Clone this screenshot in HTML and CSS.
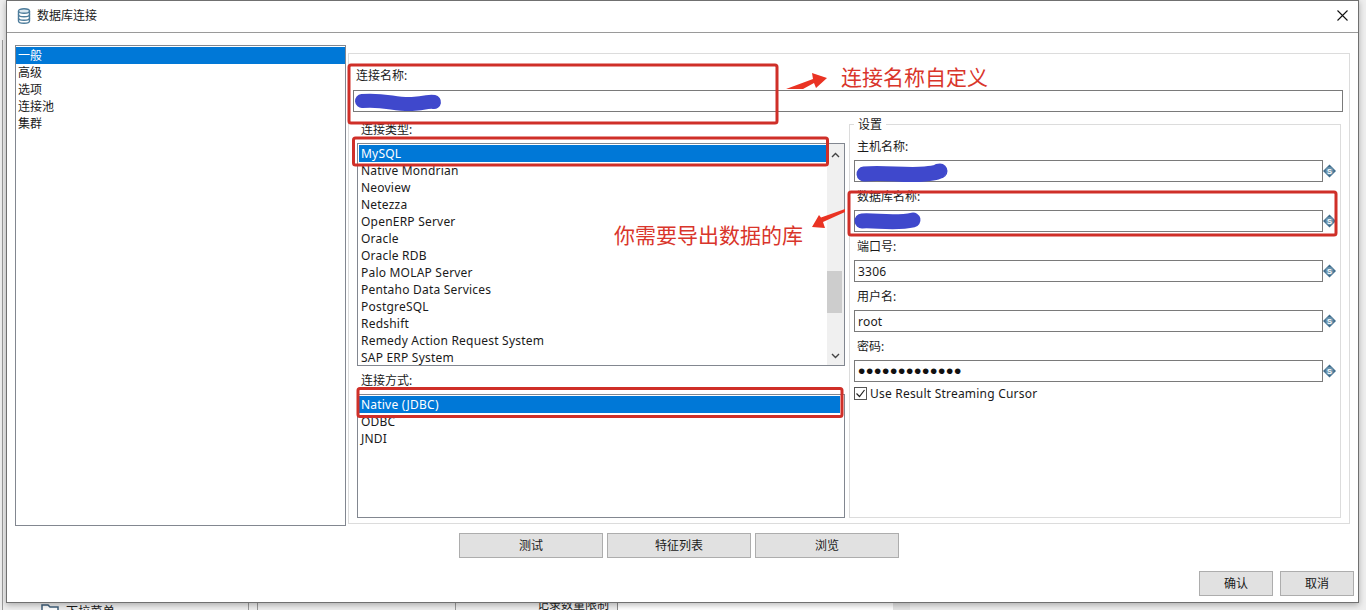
FILE: index.html
```html
<!DOCTYPE html>
<html lang="zh">
<head>
<meta charset="utf-8">
<title>数据库连接</title>
<link rel="stylesheet" href="styles.css">
</head>
<body>
<div class="backdrop">
  <span class="bg-line bg-line-a"></span>
  <span class="bg-line bg-line-b"></span>
  <span class="bg-line bg-line-c"></span>
  <svg class="bg-folder" width="18" height="12" viewBox="0 0 18 12"><path d="M1 11V1h6l2 2h8v8z" fill="#fff" stroke="#41627e" stroke-width="1.5"/></svg>
  <span class="bg-tree">下拉菜单</span>
  <span class="bg-limit">记录数量限制</span>
  <span class="bg-select"></span>
</div>

<div class="window">
  <header class="titlebar">
    <svg class="db-icon" width="14" height="16" viewBox="0 0 14 16" fill="none" stroke="#4d7c9b" stroke-width="1.4">
      <ellipse cx="7" cy="3" rx="5.5" ry="2.2" fill="#dbe8f0"/>
      <path d="M1.5 3v10c0 1.2 2.5 2.2 5.5 2.2s5.5-1 5.5-2.2V3"/>
      <path d="M1.5 6.5c0 1.2 2.5 2.2 5.5 2.2s5.5-1 5.5-2.2M1.5 10c0 1.2 2.5 2.2 5.5 2.2s5.5-1 5.5-2.2"/>
    </svg>
    <span class="title-text">数据库连接</span>
    <svg class="close-icon" width="11" height="11" viewBox="0 0 11 11" stroke="#111" stroke-width="1.1"><path d="M.5.5l10 10M10.500.5l-10 10"/></svg>
  </header>

  <div class="content">
    <ul class="nav">
      <li class="row selected">一般</li>
      <li class="row">高级</li>
      <li class="row">选项</li>
      <li class="row">连接池</li>
      <li class="row">集群</li>
    </ul>

    <section class="panel">
      <div class="name-label">连接名称:</div>
      <div class="textbox name-box"></div>

      <div class="columns">
        <div class="left-col">
          <div class="type-label">连接类型:</div>
          <div class="listbox type-list">
            <ul class="rows">
              <li class="row selected">MySQL</li>
              <li class="row">Native Mondrian</li>
              <li class="row">Neoview</li>
              <li class="row">Netezza</li>
              <li class="row">OpenERP Server</li>
              <li class="row">Oracle</li>
              <li class="row">Oracle RDB</li>
              <li class="row">Palo MOLAP Server</li>
              <li class="row">Pentaho Data Services</li>
              <li class="row">PostgreSQL</li>
              <li class="row">Redshift</li>
              <li class="row">Remedy Action Request System</li>
              <li class="row">SAP ERP System</li>
            </ul>
            <div class="scrollbar">
              <svg class="chev" width="9" height="6" viewBox="0 0 9 6" fill="none" stroke="#444" stroke-width="1.4"><path d="M1 5l3.500-3.500L8 5"/></svg>
              <div class="thumb"></div>
              <svg class="chev chev-down" width="9" height="6" viewBox="0 0 9 6" fill="none" stroke="#444" stroke-width="1.4"><path d="M1 1l3.500 3.500L8 1"/></svg>
            </div>
          </div>
          <div class="mode-label">连接方式:</div>
          <div class="listbox mode-list">
            <ul class="rows">
              <li class="row selected">Native (JDBC)</li>
              <li class="row">ODBC</li>
              <li class="row">JNDI</li>
            </ul>
          </div>
        </div>

        <fieldset class="settings">
          <legend class="settings-legend">设置</legend>
          <div class="field-label">主机名称:</div>
          <div class="field-row">
            <div class="textbox"></div>
            <svg class="var-icon" width="13" height="14" viewBox="0 0 14 14"><path d="M7 0l7 7-7 7-7-7z" fill="#3f6c8c"/><circle cx="7" cy="7" r="4.300" fill="#6a93ad"/><text x="7" y="10" class="var-s">S</text></svg>
          </div>
          <div class="field-label">数据库名称:</div>
          <div class="field-row">
            <div class="textbox"></div>
            <svg class="var-icon" width="13" height="14" viewBox="0 0 14 14"><path d="M7 0l7 7-7 7-7-7z" fill="#3f6c8c"/><circle cx="7" cy="7" r="4.300" fill="#6a93ad"/><text x="7" y="10" class="var-s">S</text></svg>
          </div>
          <div class="field-label">端口号:</div>
          <div class="field-row">
            <div class="textbox">3306</div>
            <svg class="var-icon" width="13" height="14" viewBox="0 0 14 14"><path d="M7 0l7 7-7 7-7-7z" fill="#3f6c8c"/><circle cx="7" cy="7" r="4.300" fill="#6a93ad"/><text x="7" y="10" class="var-s">S</text></svg>
          </div>
          <div class="field-label">用户名:</div>
          <div class="field-row">
            <div class="textbox">root</div>
            <svg class="var-icon" width="13" height="14" viewBox="0 0 14 14"><path d="M7 0l7 7-7 7-7-7z" fill="#3f6c8c"/><circle cx="7" cy="7" r="4.300" fill="#6a93ad"/><text x="7" y="10" class="var-s">S</text></svg>
          </div>
          <div class="field-label">密码:</div>
          <div class="field-row">
            <div class="textbox dots">•••••••••••••</div>
            <svg class="var-icon" width="13" height="14" viewBox="0 0 14 14"><path d="M7 0l7 7-7 7-7-7z" fill="#3f6c8c"/><circle cx="7" cy="7" r="4.300" fill="#6a93ad"/><text x="7" y="10" class="var-s">S</text></svg>
          </div>
          <div class="check-row">
            <svg class="checkbox" width="13" height="13" viewBox="0 0 13 13" fill="none"><rect x=".5" y=".5" width="12" height="12" fill="#fff" stroke="#555"/><path d="M2.500 6.500l3 3 5-6.500" stroke="#222" stroke-width="1.200"/></svg>
            <span>Use Result Streaming Cursor</span>
          </div>
        </fieldset>
      </div>
    </section>
  </div>

  <div class="test-row">
    <button class="btn wide">测试</button>
    <button class="btn wide">特征列表</button>
    <button class="btn wide">浏览</button>
  </div>
  <div class="action-row">
    <button class="btn small">确认</button>
    <button class="btn small">取消</button>
  </div>
</div>

<svg class="marks" width="1366" height="610" viewBox="0 0 1366 610">
  <g fill="none" stroke="#3f48cc" stroke-linecap="round">
    <path d="M362 101C385 99 395 105 412 104S428 101 434 102" stroke-width="14"/>
    <path d="M864 174C885 172 905 176 925 174S935 171 940 171" stroke-width="15"/>
    <path d="M862 221C875 220 895 224 913 220" stroke-width="15"/>
  </g>
  <g fill="none" stroke="#cf2f28" stroke-width="3">
    <rect x="349" y="65" width="428" height="58" rx="2"/>
    <rect x="353.500" y="138" width="474" height="27" rx="2"/>
    <rect x="358" y="388.500" width="484" height="28" rx="2"/>
    <rect x="849" y="192" width="487" height="43" rx="2"/>
  </g>
  <path d="M786 89L813 79L812 73L827 78L816 88L814 83L803 89Z" fill="#ea3323"/>
  <path d="M845 209L821 217.500L819 215L812 227L825 228L823 222L845 212Z" fill="#ea3323"/>
</svg>
<div class="note note-name">连接名称自定义</div>
<div class="note note-db">你需要导出数据的库</div>
</body>
</html>
```

FILE: styles.css
```css
* { box-sizing: border-box; }
html, body { margin: 0; height: 610px; overflow: hidden; }
body {
  position: relative;
  background: #eeeeee;
  font: 12px/17px "Noto Sans", "Noto Sans CJK SC", sans-serif;
  letter-spacing: .21px;
  color: #1a1a1a;
}
ul { list-style: none; margin: 0; padding: 0; }

.backdrop { position: absolute; inset: 0; }
.bg-line { position: absolute; top: 40px; bottom: 0; width: 1px; background: #9a9a9a; }
.bg-line-a { left: 2px; }
.bg-line-b { left: 248px; top: 600px; box-shadow: 9px 0 0 #9a9a9a; }
.bg-line-c { left: 455px; top: 600px; width: 1px; }
.bg-folder { position: absolute; left: 41px; top: 604px; }
.bg-tree { position: absolute; left: 66px; top: 603px; }
.bg-limit { position: absolute; left: 537px; top: 596px; letter-spacing: 0; }
.bg-select {
  position: absolute;
  left: 617px;
  top: 600px;
  width: 293px;
  height: 12px;
  border-left: 1px solid #8a8a8a;
  border-right: 17px solid #e4e4e4;
  background: #fff;
}

.window {
  position: absolute;
  left: 6px;
  top: 0;
  width: 1353px;
  height: 603px;
  background: #fff;
  border: 1px solid #707070;
  box-shadow: 0 2px 6px rgba(0, 0, 0, .28);
}
.titlebar {
  display: flex;
  align-items: center;
  height: 32px;
  border-bottom: 1px solid #9a9a9a;
  padding: 0 10px 2px 10px;
}
.db-icon { margin-right: 6px; }
.title-text { flex: 1; letter-spacing: 0; }
.close-icon { display: block; }

.content { display: flex; gap: 2px; padding: 12px 0 0 8px; }
.nav {
  width: 331px;
  height: 481px;
  border: 1px solid #828790;
  padding: 1px 0;
  letter-spacing: 0;
}
.row { height: 17px; padding-left: 2px; white-space: nowrap; }
.selected { background: #0078d7; color: #fff; }

.panel {
  width: 1002px;
  height: 471px;
  margin-top: 8px;
  border: 1px solid #dcdcdc;
  padding: 14px 6px 0 4px;
}
.name-label { height: 16px; line-height: 16px; padding-left: 3px; margin-bottom: 6px; letter-spacing: 0; }
.textbox {
  flex: 1;
  height: 22px;
  line-height: 22px;
  border: 1px solid #7a7a7a;
  padding-left: 3px;
  background: #fff;
}
.name-box { height: 22px; }

.columns {
  display: grid;
  grid-template-columns: 488px 492px;
  gap: 4px;
  margin-top: 4px;
  padding-left: 4px;
  height: 402px;
}
.left-col { display: flex; flex-direction: column; padding-top: 6px; }
.type-label { height: 21px; line-height: 15px; padding-left: 4px; letter-spacing: 0; }
.mode-label { height: 28px; line-height: 30px; padding-left: 4px; letter-spacing: 0; }
.listbox { display: flex; border: 1px solid #828790; padding: 1px 0 0 1px; }
.type-list { height: 223px; overflow: hidden; }
.mode-list { flex: 1; padding-right: 4px; }
.rows { flex: 1; min-width: 0; }
.scrollbar {
  position: relative;
  width: 17px;
  margin-top: -1px;
  background: #f0f0f0;
  display: flex;
  flex-direction: column;
  align-items: center;
}
.chev { margin: 8px 0 3px; flex: none; }
.thumb { width: 15px; height: 42px; margin: 110px 2px 0 0; background: #cdcdcd; flex: none; }
.chev-down { margin: 40px 0 0; }

.settings {
  margin: 0;
  min-width: 0;
  height: 402px;
  border: 1px solid #dcdcdc;
  padding: 0 4px;
}
.settings-legend { height: 16px; line-height: 18px; padding: 0 4px; margin-left: 0; letter-spacing: 0; }
.field-label { height: 28px; line-height: 30px; padding-left: 3px; letter-spacing: 0; }
.field-row { display: flex; align-items: center; }
.var-icon { flex: none; }
.var-s { font: bold 8px "Liberation Sans", sans-serif; fill: #fff; text-anchor: middle; letter-spacing: 0; }
.dots { font: 21px/20px "Liberation Sans", sans-serif; letter-spacing: .65px; color: #111; overflow: hidden; }
.check-row { display: flex; align-items: center; gap: 3px; height: 13px; margin-top: 5px; }
.checkbox { flex: none; }

.test-row { display: flex; gap: 4px; padding-left: 452px; margin-top: 7px; }
.action-row { display: flex; gap: 7px; justify-content: flex-end; padding-right: 4px; margin-top: 13px; }
.btn {
  height: 25px;
  padding: 0;
  background: #e1e1e1;
  border: 1px solid #adadad;
  font: inherit;
  letter-spacing: 0;
  color: #1a1a1a;
}
.wide { width: 144px; }
.small { width: 74px; }

.marks { position: absolute; left: 0; top: 0; pointer-events: none; }
.note {
  position: absolute;
  font: 21px/28px "Noto Sans CJK SC", sans-serif;
  letter-spacing: 0;
  color: #d9352b;
  white-space: nowrap;
}
.note-name { left: 841px; top: 62px; }
.note-db { left: 614px; top: 220px; }
```
